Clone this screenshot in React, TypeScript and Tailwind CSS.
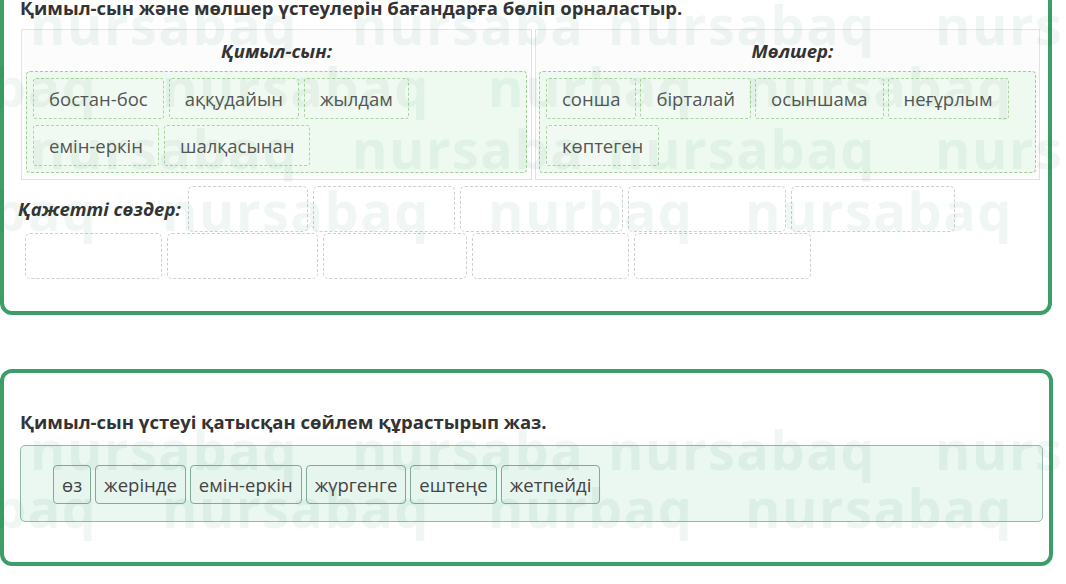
import React from "react";

const font = { fontFamily: '"Open Sans", "Noto Sans", sans-serif' };

function WRow({ top, words }: { top: number; words: [string, number][] }) {
  return (
    <>
      {words.map(([w, x], i) => (
        <span
          key={i}
          className="absolute whitespace-nowrap text-[54px] font-bold leading-none tracking-[1.5px] text-[rgba(40,125,80,0.07)]"
          style={{ top, left: x }}
        >
          {w}
        </span>
      ))}
    </>
  );
}

const rowA: [string, number][] = [
  ["nursabaq", 30],
  ["nursaba", 352],
  ["nursabaq", 608],
  ["nurs", 935],
];
const rowB: [string, number][] = [
  ["baq", -8],
  ["nursabaq", 162],
  ["nurbaq", 488],
  ["nursabaq", 745],
];

function Chip({ t }: { t: string }) {
  return (
    <div className="flex h-[41px] items-center rounded-[3px] border border-dashed border-[#a9d59f] bg-[#f1faf2] px-[15px] text-[18.5px] text-[#555]">
      {t}
    </div>
  );
}

function Slot({ w }: { w: number }) {
  return (
    <div
      className="h-[46px] shrink-0 rounded-[5px] border border-dashed border-[#cfcfcf]"
      style={{ width: w }}
    />
  );
}

function Chip2({ t }: { t: string }) {
  return (
    <div className="flex h-[39px] items-center rounded-[4px] border border-[#7fab97] bg-[#e6f5ee] px-[8px] text-[18.5px] text-[#444]">
      {t}
    </div>
  );
}

export default function App() {
  return (
    <div className="relative h-[584px] w-[1066px] overflow-hidden bg-white" style={font}>
      {/* Card 1 */}
      <div className="mr-[14px] -mt-[38px] rounded-[12px] border-4 border-[#3b9d67] pb-[32px] pl-[17px] pr-[8px] pt-[30px]">
        <div className="-ml-[1px] text-[18.5px] font-bold leading-[24px] text-[#333]">
          Қимыл-сын және мөлшер үстеулерін бағандарға бөліп орналастыр.
        </div>
        <div className="mt-[9px] grid grid-cols-[511px_1fr] gap-[3px]">
          <div className="border border-[#e2e2e2] bg-[#fcfcfc] px-[4px] pb-[6px]">
            <div className="flex h-[41px] items-center justify-center text-[18.5px] font-bold italic text-[#333]">
              Қимыл-сын:
            </div>
            <div className="flex flex-col gap-[6px] rounded-[4px] border border-dashed border-[#9fd08f] bg-[#eefaf0] px-[6px] py-[6px]">
              <div className="flex gap-[5px]">
                <Chip t="бостан-бос" />
                <Chip t="аққудайын" />
                <Chip t="жылдам" />
              </div>
              <div className="flex gap-[5px]">
                <Chip t="емін-еркін" />
                <Chip t="шалқасынан" />
              </div>
            </div>
          </div>
          <div className="border border-[#e2e2e2] bg-[#fcfcfc] px-[3px] pb-[6px]">
            <div className="flex h-[41px] items-center justify-center pl-[10px] text-[18.5px] font-bold italic text-[#333]">
              Мөлшер:
            </div>
            <div className="flex flex-col gap-[6px] rounded-[4px] border border-dashed border-[#9fd08f] bg-[#eefaf0] px-[6px] py-[6px]">
              <div className="flex gap-[4px]">
                <Chip t="сонша" />
                <Chip t="бірталай" />
                <Chip t="осыншама" />
                <Chip t="неғұрлым" />
              </div>
              <div className="flex gap-[5px]">
                <Chip t="көптеген" />
              </div>
            </div>
          </div>
        </div>
        <div className="mt-[6px] flex flex-col gap-[1px]">
          <div className="flex items-center">
            <div className="-ml-[3px] w-[170px] shrink-0 text-[18.5px] font-bold italic text-[#333]">
              Қажетті сөздер:
            </div>
            <div className="flex gap-[5px]">
              <Slot w={120} />
              <Slot w={142} />
              <Slot w={163} />
              <Slot w={158} />
              <Slot w={164} />
            </div>
          </div>
          <div className="flex gap-[5px] pl-[4px]">
            <Slot w={137} />
            <Slot w={151} />
            <Slot w={144} />
            <Slot w={157} />
            <Slot w={177} />
          </div>
        </div>
      </div>

      {/* Card 2 */}
      <div className="mr-[13px] mt-[54px] rounded-[12px] border-4 border-[#3b9d67] pb-[40px] pl-[16px] pr-[6px] pt-[37px]">
        <div className="text-[18.5px] font-bold leading-[24px] text-[#333]">
          Қимыл-сын үстеуі қатысқан сөйлем құрастырып жаз.
        </div>
        <div className="mt-[11px] rounded-[5px] border border-[#93bba9] bg-[#eaf8f1] pb-[17px] pl-[32px] pt-[19px]">
          <div className="flex gap-[4px]">
            <Chip2 t="өз" />
            <Chip2 t="жерінде" />
            <Chip2 t="емін-еркін" />
            <Chip2 t="жүргенге" />
            <Chip2 t="ештеңе" />
            <Chip2 t="жетпейді" />
          </div>
        </div>
      </div>

      {/* watermark overlay */}
      <div className="pointer-events-none absolute inset-0" style={font}>
        <WRow top={-3} words={rowA} />
        <WRow top={59} words={rowB} />
        <WRow top={121} words={rowA} />
        <WRow top={183} words={rowB} />
        <WRow top={422} words={rowA} />
        <WRow top={480} words={rowB} />
      </div>
    </div>
  );
}
